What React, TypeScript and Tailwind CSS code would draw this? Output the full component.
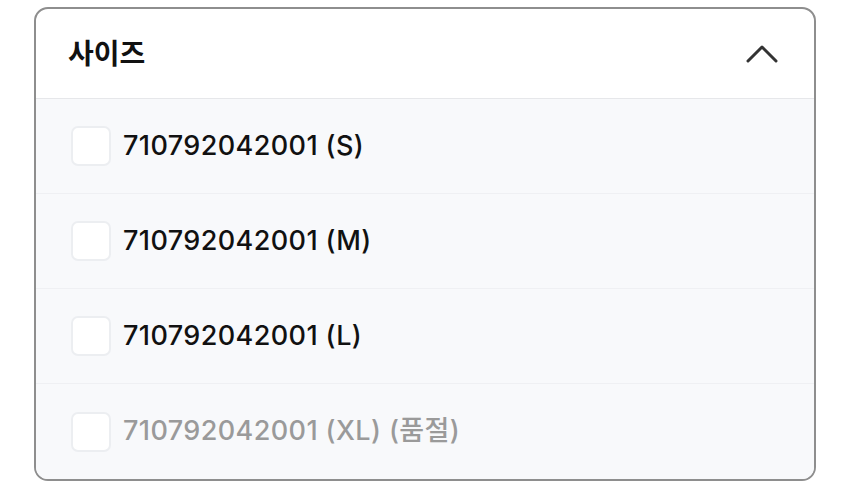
import React, { useState } from 'react';

type SizeOption = {
  code: string;
  size: string;
  soldOut?: boolean;
};

const options: SizeOption[] = [
  { code: '710792042001', size: 'S' },
  { code: '710792042001', size: 'M' },
  { code: '710792042001', size: 'L' },
  { code: '710792042001', size: 'XL', soldOut: true },
];

const App: React.FC = () => {
  const [open, setOpen] = useState(true);
  const [checked, setChecked] = useState<Record<number, boolean>>({});

  return (
    <div
      className="min-h-screen bg-white pl-[34px] pr-[34px] pt-[7px]"
      style={{ fontFamily: 'Inter, "Noto Sans CJK KR", sans-serif' }}
    >
      <div className="w-[782px] overflow-hidden rounded-[14px] border-2 border-[#8e8e8e] bg-white">
        {/* Header */}
        <button
          type="button"
          onClick={() => setOpen(!open)}
          className="flex h-[90px] w-full items-center justify-between border-b border-[#e6e7ea] pl-[32px] pr-[36px]"
        >
          <span className="text-[28px] font-bold text-[#111]">사이즈</span>
          <svg width="32" height="20" viewBox="0 0 32 20" fill="none" className={open ? '' : 'rotate-180'}>
            <path d="M2 17L16 3L30 17" stroke="#333" strokeWidth="3" strokeLinecap="round" strokeLinejoin="round" />
          </svg>
        </button>

        {/* Options */}
        {open && (
          <ul className="bg-[#f8f9fb]">
            {options.map((opt, i) => (
              <li
                key={i}
                className={`flex h-[95px] items-center pl-[35px] ${
                  i < options.length - 1 ? 'border-b border-[#eff0f3]' : ''
                }`}
              >
                <button
                  type="button"
                  disabled={opt.soldOut}
                  onClick={() => setChecked({ ...checked, [i]: !checked[i] })}
                  className="h-[40px] w-[40px] shrink-0 rounded-[7px] border-2 border-[#eceef1] bg-white"
                />
                <span
                  className={`ml-[12px] text-[27px] font-medium tracking-[0.4px] ${
                    opt.soldOut ? 'text-[#9a9a9a]' : 'text-[#111]'
                  }`}
                >
                  {opt.code} ({opt.size}){opt.soldOut ? ' (품절)' : ''}
                </span>
              </li>
            ))}
          </ul>
        )}
      </div>
    </div>
  );
};

export default App;
